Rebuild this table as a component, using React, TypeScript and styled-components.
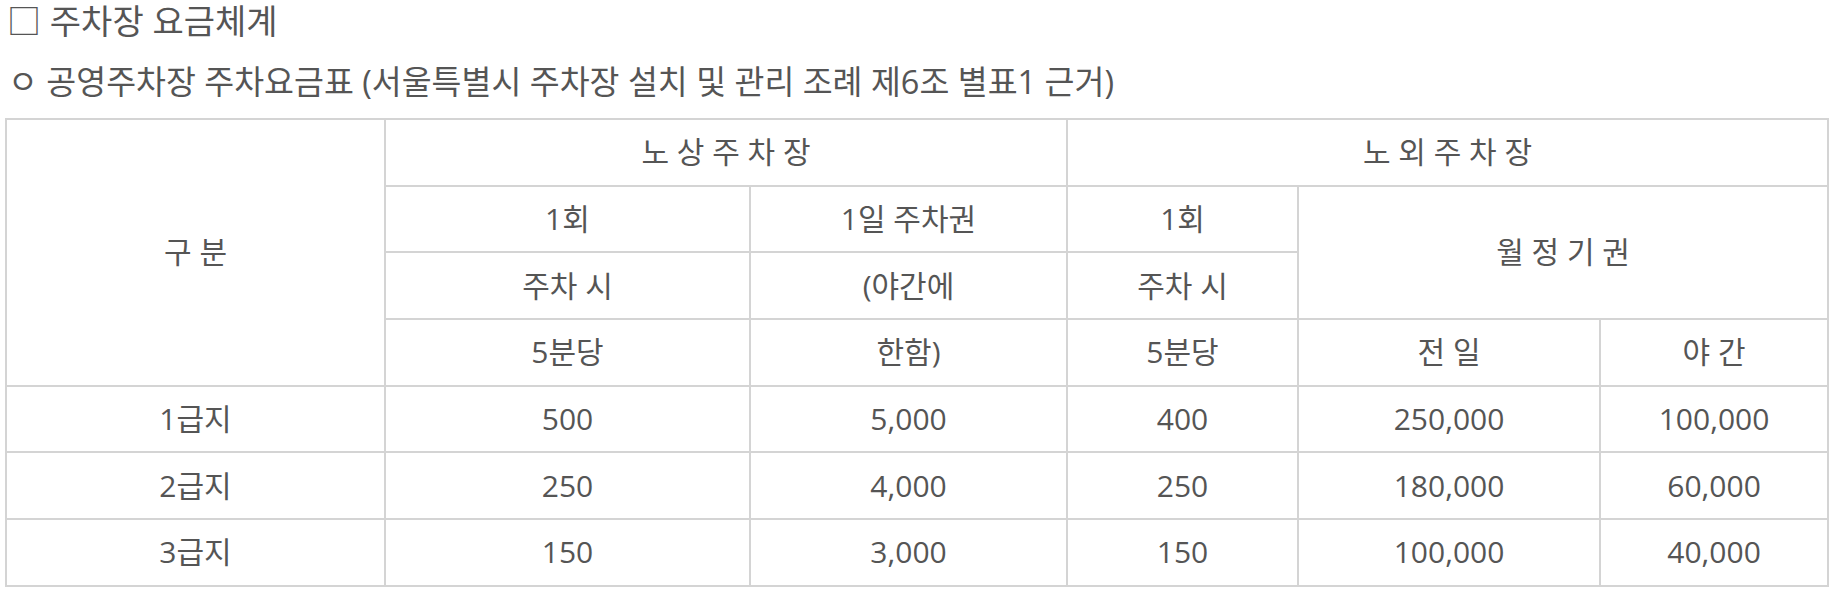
import React from 'react';
import styled, { createGlobalStyle } from 'styled-components';

const GlobalStyle = createGlobalStyle`
  html, body {
    margin: 0;
    padding: 0;
    background: #fff;
  }
  body {
    font-family: "Open Sans", "Noto Sans CJK KR", sans-serif;
    color: #555;
  }
`;

const Page = styled.div`
  padding: 0 5px;
`;

const Title = styled.p`
  margin: 0;
  padding-left: 2px;
  font-size: 34px;
  line-height: 42px;
`;

const SubTitle = styled.p`
  margin: 19px 0 0;
  padding-left: 3px;
  font-size: 32.5px;
  line-height: 42px;
`;

const Table = styled.table`
  margin-top: 15px;
  width: 1824px;
  table-layout: fixed;
  border-collapse: collapse;
  border: 2px solid #d4d4d4;
`;

const Row = styled.tr`
  height: 66.7px;
`;

const Cell = styled.td`
  border: 2px solid #d4d4d4;
  padding: 0;
  text-align: center;
  vertical-align: middle;
  font-size: 30px;
  line-height: 40px;
  color: #555;
`;

const cols = [379, 365, 317, 231, 302, 228];

const rows = [
  ['1급지', '500', '5,000', '400', '250,000', '100,000'],
  ['2급지', '250', '4,000', '250', '180,000', '60,000'],
  ['3급지', '150', '3,000', '150', '100,000', '40,000'],
];

export default function App() {
  return (
    <Page>
      <GlobalStyle />
      <Title>□ 주차장 요금체계</Title>
      <SubTitle>ㅇ 공영주차장 주차요금표 (서울특별시 주차장 설치 및 관리 조례 제6조 별표1 근거)</SubTitle>
      <Table>
        <colgroup>
          {cols.map((w, i) => (
            <col key={i} width={w} />
          ))}
        </colgroup>
        <tbody>
          <Row>
            <Cell rowSpan={4}>구 분</Cell>
            <Cell colSpan={2}>노 상 주 차 장</Cell>
            <Cell colSpan={3}>노 외 주 차 장</Cell>
          </Row>
          <Row>
            <Cell>1회</Cell>
            <Cell>1일 주차권</Cell>
            <Cell>1회</Cell>
            <Cell colSpan={2} rowSpan={2}>월 정 기 권</Cell>
          </Row>
          <Row>
            <Cell>주차 시</Cell>
            <Cell>(야간에</Cell>
            <Cell>주차 시</Cell>
          </Row>
          <Row>
            <Cell>5분당</Cell>
            <Cell>한함)</Cell>
            <Cell>5분당</Cell>
            <Cell>전 일</Cell>
            <Cell>야 간</Cell>
          </Row>
          {rows.map((r) => (
            <Row key={r[0]}>
              {r.map((v, i) => (
                <Cell key={i}>{v}</Cell>
              ))}
            </Row>
          ))}
        </tbody>
      </Table>
    </Page>
  );
}
